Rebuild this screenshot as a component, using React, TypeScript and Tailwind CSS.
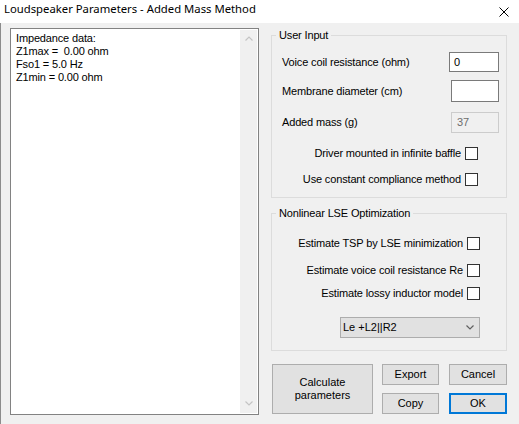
import React from 'react';

const Box = () => <span className="inline-block w-[13px] h-[13px] shrink-0 border border-[#333333] bg-white" />;

const Chevron = ({ up, color }: { up?: boolean; color: string }) => (
  <svg width="8" height="5" viewBox="0 0 8 5">
    <path d={up ? 'M0.5 4.5L4 1L7.5 4.5' : 'M0.5 0.5L4 4L7.5 0.5'} fill="none" stroke={color} strokeWidth="1.2" />
  </svg>
);

const btn = 'bg-[#e1e1e1] border border-[#adadad] tracking-normal leading-[13px] flex items-center justify-center text-center';

export default function App() {
  return (
    <div className="w-[519px] h-[424px] overflow-hidden bg-[#f0f0f0] text-black text-[11px] tracking-[-0.15px] font-['Liberation_Sans',Arial,sans-serif]">
      {/* title bar */}
      <div className="h-[23px] bg-white flex items-start justify-between">
        <span className="pl-[4px] pt-[2px] leading-[14px] tracking-normal text-[11.3px] font-['Noto_Sans',sans-serif]">
          Loudspeaker Parameters - Added Mass Method
        </span>
        <svg className="mt-[7px] mr-[10px]" width="10" height="10" viewBox="0 0 10 10">
          <path d="M0.5 0.5L9.5 9.5M9.5 0.5L0.5 9.5" stroke="#000" strokeWidth="1" />
        </svg>
      </div>

      <div className="h-[401px] flex border-l border-[#8c8c8c] pl-[9px] pt-[5px]">
        {/* impedance readout */}
        <div className="w-[249px] h-[387px] border border-[#828282] bg-white flex">
          <div className="flex-1 pl-[5px] pt-[3px] leading-[13px] whitespace-pre">
            <div>Impedance data:</div>
            <div>Z1max =  0.00 ohm</div>
            <div>Fso1 = 5.0 Hz</div>
            <div>Z1min = 0.00 ohm</div>
          </div>
          <div className="w-[17px] my-[1px] mr-[1px] bg-[#f0f0f0] flex flex-col items-center justify-between pt-[6px] pb-[7px]">
            <Chevron up color="#c4c4c4" />
            <Chevron color="#c4c4c4" />
          </div>
        </div>

        <div className="ml-[12px] w-[236px] flex flex-col">
          <fieldset className="mt-[1px] h-[169px] border border-[#dcdcdc]">
            <legend className="ml-[4px] px-[3px] leading-[13px]">User Input</legend>
            <div className="flex flex-col pl-[10px] pr-[7px]">
              <div className="mt-[10px] h-[20px] flex items-center justify-between">
                <span>Voice coil resistance (ohm)</span>
                <div className="w-[50px] h-[20px] border border-[#7a7a7a] bg-white pl-[4px] leading-[18px]">0</div>
              </div>
              <div className="mt-[8px] h-[22px] flex items-center justify-between">
                <span>Membrane diameter (cm)</span>
                <div className="w-[48px] h-[22px] border border-[#7a7a7a] bg-white" />
              </div>
              <div className="mt-[10px] h-[21px] flex items-center justify-between">
                <span>Added mass (g)</span>
                <div className="w-[48px] h-[21px] border border-[#cccccc] bg-[#f0f0f0] pl-[5px] leading-[19px] text-[#6d6d6d]">37</div>
              </div>
              <div className="mt-[14px] h-[13px] flex items-center justify-end gap-[4px] pr-[21px]">
                <span>Driver mounted in infinite baffle</span>
                <Box />
              </div>
              <div className="mt-[13px] h-[13px] flex items-center justify-end gap-[4px] pr-[21px]">
                <span>Use constant compliance method</span>
                <Box />
              </div>
            </div>
          </fieldset>

          <fieldset className="mt-[9px] h-[144px] border border-[#dcdcdc]">
            <legend className="ml-[4px] px-[3px] leading-[13px]">Nonlinear LSE Optimization</legend>
            <div className="flex flex-col pl-[10px] pr-[26px]">
              <div className="mt-[17px] h-[13px] flex items-center justify-end gap-[4px]">
                <span>Estimate TSP by LSE minimization</span>
                <Box />
              </div>
              <div className="mt-[14px] h-[13px] flex items-center justify-end gap-[4px]">
                <span>Estimate voice coil resistance Re</span>
                <Box />
              </div>
              <div className="mt-[10px] h-[13px] flex items-center justify-end gap-[4px]">
                <span>Estimate lossy inductor model</span>
                <Box />
              </div>
              <div className="mt-[17px] flex justify-end">
                <div className="w-[140px] h-[21px] bg-[#e1e1e1] border border-[#adadad] flex items-center justify-between pl-[2px] pr-[5px]">
                  <span className="tracking-normal">Le +L2||R2</span>
                  <Chevron color="#606060" />
                </div>
              </div>
            </div>
          </fieldset>

          <div className="mt-[13px] ml-[1px] flex">
            <button className={`w-[101px] h-[50px] ${btn}`}>
              Calculate
              <br />
              parameters
            </button>
            <div className="ml-[9px] grid grid-cols-[57px_58px] gap-x-[10px] gap-y-[8px]">
              <button className={`h-[21px] ${btn}`}>Export</button>
              <button className={`h-[21px] ${btn}`}>Cancel</button>
              <button className={`h-[21px] ${btn}`}>Copy</button>
              <button className="h-[21px] bg-[#e1e1e1] border-2 border-[#0078d7] tracking-normal leading-[13px] flex items-center justify-center">
                OK
              </button>
            </div>
          </div>
        </div>
      </div>
    </div>
  );
}
